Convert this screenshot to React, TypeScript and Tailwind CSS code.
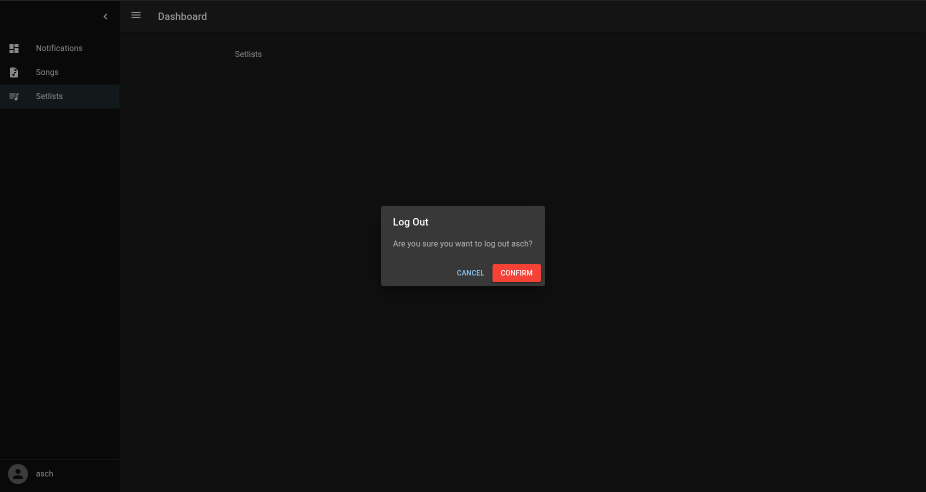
import type { ReactNode } from "react";
import { MdDashboard, MdAudioFile, MdQueueMusic, MdChevronLeft, MdMenu, MdPerson } from "react-icons/md";

function NavItem({ icon, label, active = false }: { icon: ReactNode; label: string; active?: boolean }) {
  return (
    <li className={`flex h-12 items-center pl-4 ${active ? "bg-[#12191b]" : ""}`}>
      <span className="flex w-14 text-2xl text-[#888888]">{icon}</span>
      <span className="text-base tracking-[0.15px]">{label}</span>
    </li>
  );
}

function Sidebar() {
  return (
    <aside className="flex w-[240px] shrink-0 flex-col border-r border-[#0d0d0d] bg-[#090909]">
      <div className="flex h-[62px] items-center justify-end pr-4">
        <button className="text-2xl text-[#959595]" aria-label="Collapse">
          <MdChevronLeft />
        </button>
      </div>
      <ul className="pt-[9px]">
        <NavItem icon={<MdDashboard />} label="Notifications" />
        <NavItem icon={<MdAudioFile />} label="Songs" />
        <NavItem icon={<MdQueueMusic />} label="Setlists" active />
      </ul>
      <div className="mt-auto flex h-[66px] items-center border-t-2 border-[#121212] pb-2 pl-4">
        <span className="flex size-10 items-center justify-center rounded-full bg-[#3b3b3b] text-[30px] text-[#0b0b0b]">
          <MdPerson />
        </span>
        <span className="pl-4 text-base tracking-[0.15px]">asch</span>
      </div>
    </aside>
  );
}

function LogoutDialog() {
  return (
    <div className="absolute inset-0 flex items-center justify-center pb-[2px]">
      <div
        role="dialog"
        className="flex h-40 w-[328px] flex-col rounded bg-[#383838] shadow-[0_11px_15px_-7px_rgba(0,0,0,0.2),0_24px_38px_3px_rgba(0,0,0,0.14),0_9px_46px_8px_rgba(0,0,0,0.12)]"
      >
        <h2 className="px-6 pt-4 text-xl leading-8 font-medium tracking-[0.15px] text-white">Log Out</h2>
        <p className="px-6 pt-4 text-base tracking-[0.15px] whitespace-nowrap text-[#b8b8b8]">
          Are you sure you want to log out asch?
        </p>
        <div className="mt-auto flex justify-end gap-2 p-2 text-sm font-medium tracking-[0.4px]">
          <button className="h-9 px-2 text-[#90caf9]">CANCEL</button>
          <button className="h-9 w-[97px] rounded bg-[#f44336] text-white shadow-[0_3px_1px_-2px_rgba(0,0,0,0.2),0_2px_2px_rgba(0,0,0,0.14),0_1px_5px_rgba(0,0,0,0.12)]">
            CONFIRM
          </button>
        </div>
      </div>
    </div>
  );
}

export default function App() {
  return (
    <div className="h-screen w-screen overflow-hidden bg-[#101010]">
      <div className="relative flex h-[984px] w-[1852px] origin-top-left transform-[scale(0.5)] will-change-transform flex-col border-t-2 border-[#222222] bg-[#101010] font-['Roboto',sans-serif] text-[#8c8c8c]">
        <div className="flex min-h-0 flex-1">
          <Sidebar />
          <div className="flex-1">
            <header className="flex h-[63px] items-center bg-[#141414] pb-px pl-5 shadow-[0_2px_4px_rgba(0,0,0,0.3)]">
              <button className="mb-[6px] text-2xl text-[#959595]" aria-label="Menu">
                <MdMenu />
              </button>
              <h1 className="pl-8 text-xl leading-8 font-medium tracking-[0.15px] text-[#959595]">Dashboard</h1>
            </header>
            <main className="pt-8 pl-[230px]">
              <p className="text-base tracking-[0.15px]">Setlists</p>
            </main>
          </div>
        </div>
        <LogoutDialog />
      </div>
    </div>
  );
}
